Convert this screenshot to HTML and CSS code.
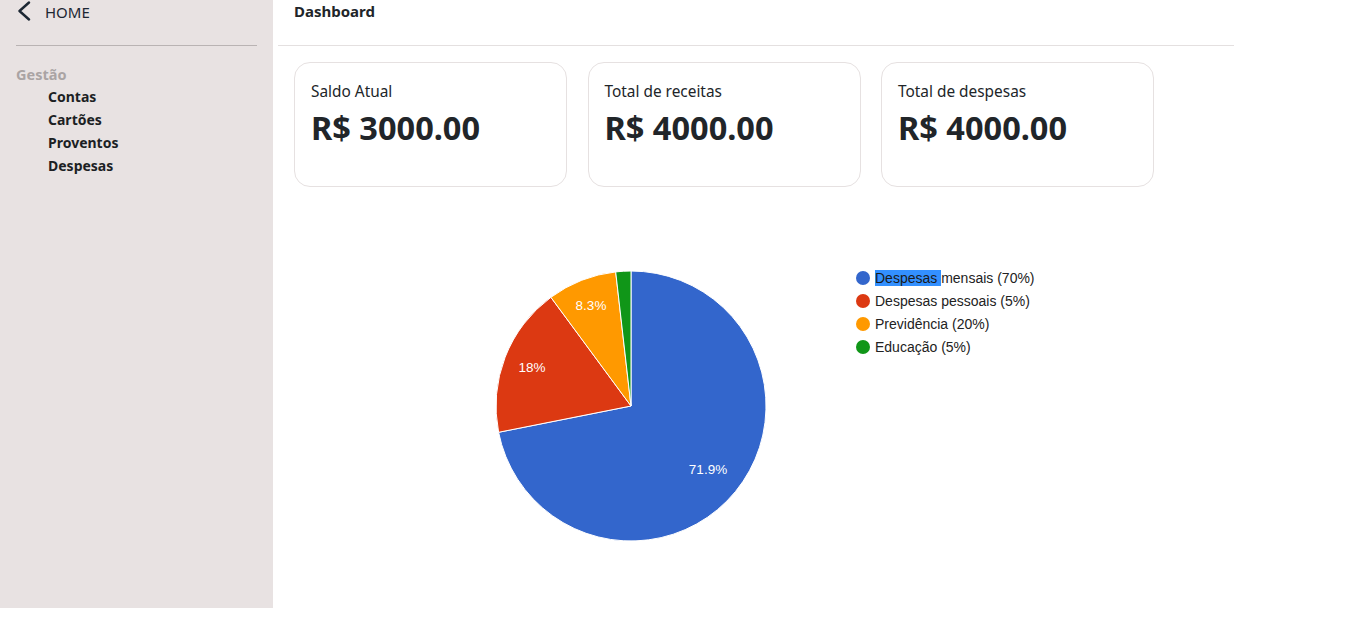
FILE: index.html
```
<!DOCTYPE html>
<html lang="pt-BR">
<head>
<meta charset="utf-8">
<title>Dashboard</title>
<link rel="stylesheet" href="styles.css">
</head>
<body>
<div class="layout">
  <aside class="sidebar">
    <a class="home" href="#">
      <svg class="chev" width="14" height="20" viewBox="0 0 14 20"><path d="M12 1.5 L2.5 10 L12 18.5" fill="none" stroke="#1c2733" stroke-width="2.4" stroke-linecap="round" stroke-linejoin="round"/></svg>
      <span>HOME</span>
    </a>
    <hr class="side-rule">
    <div class="group-title">Gestão</div>
    <ul class="menu">
      <li>Contas</li>
      <li>Cartões</li>
      <li>Proventos</li>
      <li>Despesas</li>
    </ul>
  </aside>
  <main class="main">
    <header class="topbar"><h1>Dashboard</h1></header>
    <section class="cards">
      <div class="card"><div class="card-title">Saldo Atual</div><div class="card-value">R$ 3000.00</div></div>
      <div class="card"><div class="card-title">Total de receitas</div><div class="card-value">R$ 4000.00</div></div>
      <div class="card"><div class="card-title">Total de despesas</div><div class="card-value">R$ 4000.00</div></div>
    </section>
    <section class="chart">
      <svg class="pie" width="272" height="272" viewBox="-136 -136 272 272">
        <g stroke="#fff" stroke-width="1">
          <path d="M0 0 L0 -135 A135 135 0 1 1 -132.4 26.3 Z" fill="#3366cc"/>
          <path d="M0 0 L-132.4 26.3 A135 135 0 0 1 -80.1 -108.7 Z" fill="#dc3912"/>
          <path d="M0 0 L-80.1 -108.7 A135 135 0 0 1 -15.3 -134.1 Z" fill="#ff9900"/>
          <path d="M0 0 L-15.3 -134.1 A135 135 0 0 1 0 -135 Z" fill="#109618"/>
        </g>
        <g class="pie-label" fill="#fff">
          <text x="77" y="68" text-anchor="middle">71.9%</text>
          <text x="-99" y="-34" text-anchor="middle">18%</text>
          <text x="-40" y="-96" text-anchor="middle">8.3%</text>
        </g>
      </svg>
      <ul class="legend">
        <li><span class="dot blue"></span><span><span class="sel">Despesas </span>mensais (70%)</span></li>
        <li><span class="dot red"></span><span>Despesas pessoais (5%)</span></li>
        <li><span class="dot orange"></span><span>Previdência (20%)</span></li>
        <li><span class="dot green"></span><span>Educação (5%)</span></li>
      </ul>
    </section>
  </main>
</div>
</body>
</html>
```
FILE: styles.css
```
* { box-sizing: border-box; }
html, body { margin: 0; padding: 0; background: #fff; }
body { font-family: "Segoe UI", "Noto Sans", "Open Sans", sans-serif; color: #212529; }

.layout { display: flex; height: 608px; }

.sidebar {
  width: 273px;
  flex: none;
  background: #e8e2e2;
  padding: 0 16px;
}
.home {
  display: flex;
  align-items: center;
  gap: 14px;
  height: 23px;
  text-decoration: none;
  color: #1c2733;
  font-size: 15px;
}
.chev { margin-left: 1px; margin-top: -1px; }
.side-rule {
  border: 0;
  border-top: 1px solid #b9b3b3;
  margin: 22px 0 0;
}
.group-title {
  margin-top: 19px;
  font-size: 14.5px;
  font-weight: 700;
  color: #aaa4a4;
  line-height: 19px;
}
.menu {
  list-style: none;
  margin: 0;
  padding: 0 0 0 32px;
}
.menu li {
  font-size: 14px;
  font-weight: 700;
  line-height: 23px;
  color: #1c1f24;
}
.menu li:first-child { margin-top: 1px; }

.main { flex: 1; padding-left: 5px; }
.topbar {
  width: 956px;
  height: 46px;
  border-bottom: 1px solid #e4e0e0;
  padding-left: 16px;
}
.topbar h1 {
  margin: 0;
  font-size: 15px;
  font-weight: 700;
  line-height: 23px;
}
.cards {
  display: flex;
  gap: 20.5px;
  padding: 16px 0 0 16px;
}
.card {
  width: 273px;
  height: 125px;
  border: 1px solid #e6e1e1;
  border-radius: 16px;
  padding: 18px 16px;
}
.card-title { font-size: 15.4px; line-height: 22px; }
.card-value { font-size: 32.5px; font-weight: 700; line-height: 42px; margin-top: 4px; }

.chart {
  display: flex;
  align-items: flex-start;
  padding: 83px 0 0 217px;
}
.pie { display: block; }
.pie-label { font-family: "Liberation Sans", Arial, sans-serif; font-size: 13.5px; }
.legend {
  list-style: none;
  margin: -4px 0 0 89px;
  padding: 0;
  font-family: "Liberation Sans", Arial, sans-serif;
  font-size: 14px;
  color: #222;
}
.legend li {
  display: flex;
  align-items: center;
  gap: 5px;
  height: 23px;
}
.dot { width: 14px; height: 14px; border-radius: 50%; flex: none; }
.blue { background: #3366cc; }
.red { background: #dc3912; }
.orange { background: #ff9900; }
.green { background: #109618; }
.sel { background: #3390ff; color: #1a1a1a; }
```
